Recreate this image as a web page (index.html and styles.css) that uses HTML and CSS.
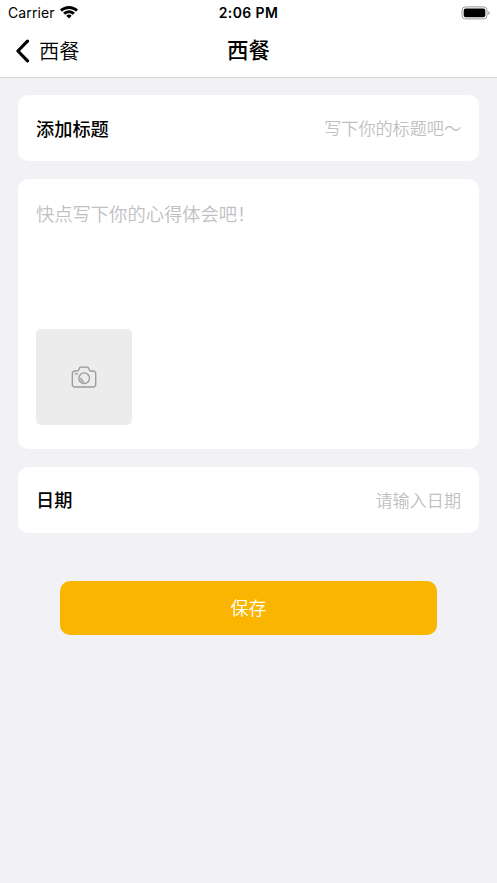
FILE: index.html
```
<!DOCTYPE html>
<html lang="zh-CN">
<head>
<meta charset="utf-8">
<title>西餐</title>
<link rel="stylesheet" href="styles.css">
</head>
<body>
<header class="top">
  <div class="status">
    <div class="carrier"><span>Carrier</span>
      <svg class="wifi" viewBox="0 0 18 13"><path d="M9 0C5.600 0 2.500 1.300 0 3.600L2 5.700C3.900 3.900 6.300 2.900 9 2.900s5.100 1 7 2.800l2-2.100C15.500 1.300 12.400 0 9 0Z"/><path d="M9 4.300c-2.200 0-4.300.9-5.900 2.400l2.100 2.100C6.200 7.800 7.500 7.200 9 7.200s2.800.6 3.800 1.600l2.100-2.100C13.300 5.200 11.200 4.300 9 4.300Z"/><path d="M9 8.600c-1.100 0-2 .4-2.700 1.100L9 12.600l2.700-2.900C11 9 10.100 8.600 9 8.600Z"/></svg>
    </div>
    <span class="time">2:06 PM</span>
    <svg class="battery" viewBox="0 0 30 14"><rect x="1" y=".9" width="25" height="12" rx="3.500" fill="none" stroke="#999"/><rect x="2.700" y="2.600" width="21.600" height="8.600" rx="2"/><path d="M27.300 4.900v4c1.900-.7 1.900-3.300 0-4Z" fill="#999"/></svg>
  </div>
  <nav class="nav">
    <a class="back"><svg class="chevron" viewBox="0 0 14 24"><path d="M11.500 2.200 1.900 12l9.600 9.800"/></svg><span>西餐</span></a>
    <h1 class="title">西餐</h1>
  </nav>
</header>
<main class="form">
  <section class="card row"><span class="label">添加标题</span><span class="hint">写下你的标题吧～</span></section>
  <section class="card note"><p class="prompt">快点写下你的心得体会吧！</p>
    <div class="photo"><svg class="camera" viewBox="0 0 26 22"><path d="M3.800 5H6.200Q7.300 5 7.700 4L8.400 2.200Q8.800 1.200 10 1.200h6Q17.200 1.200 17.600 2.200L18.300 4Q18.700 5 19.800 5h2.400a2.500 2.500 0 0 1 2.500 2.500v11a2.500 2.500 0 0 1-2.500 2.500H3.800a2.500 2.500 0 0 1-2.500-2.500v-11A2.500 2.500 0 0 1 3.800 5Z"/><circle cx="13.200" cy="12.200" r="5.300"/><path d="M9.900 12.200A3.300 3.300 0 0 0 12.400 15.300M4.200 7.800h2.400"/></svg></div>
  </section>
  <section class="card row"><span class="label">日期</span><span class="hint">请输入日期</span></section>
  <button class="save">保存</button>
</main>
</body>
</html>
```
FILE: styles.css
```
* { box-sizing: border-box; }
body { margin: 0; min-height: 883px; background: #f2f1f6; font-family: Inter, "Noto Sans CJK SC", sans-serif; color: #000; }
.top { height: 78px; background: #fff; border-bottom: 1px solid #d4d4d6; }
.status { height: 25px; padding: 0 6px 0 8px; display: grid; grid-template-columns: 1fr auto 1fr; align-items: center; font-size: 14px; letter-spacing: .1px; }
.carrier { display: flex; align-items: center; gap: 5.500px; }
.wifi { width: 18px; height: 13px; }
.time { font-weight: 600; letter-spacing: .4px; margin-right: 2px; }
.battery { width: 30px; height: 14px; justify-self: end; }
.nav { height: 52px; padding: 0 16px; display: grid; grid-template-columns: 1fr auto 1fr; align-items: center; }
.back { display: flex; align-items: center; gap: 9px; font-size: 20.300px; line-height: 28px; }
.back span { padding-top: 1px; font-weight: 350; }
.chevron { width: 14px; height: 24px; margin-left: -.5px; margin-right: .5px; fill: none; stroke: #000; stroke-width: 3.200; stroke-linecap: round; stroke-linejoin: round; }
.title { margin: 0; padding-bottom: 2px; font-size: 21.500px; line-height: 30px; font-weight: 500; }
.form { padding: 17px 18px; display: flex; flex-direction: column; gap: 18px; }
.card { background: #fff; border-radius: 10px; padding: 0 18px; }
.row { height: 66px; padding-bottom: 1px; display: flex; align-items: center; justify-content: space-between; }
.label { font-size: 18.200px; font-weight: 500; }
.hint { font-size: 17.100px; font-weight: 350; color: #c0c0c2; }
.note { height: 269.700px; padding: 21px 18px 23.700px; display: flex; flex-direction: column; justify-content: space-between; }
.prompt { margin: 0; font-size: 18.300px; line-height: 28px; font-weight: 350; color: #c0c0c2; }
.photo { width: 96px; height: 96px; border-radius: 5px; background: #ececec; display: grid; place-items: center; }
.camera { width: 26px; height: 22px; fill: none; stroke: #999; stroke-width: 1.300; stroke-linecap: round; }
.save { margin: 30px 42px 0; padding: 0 0 1px; height: 54px; border: 0; border-radius: 10px; background: #f9b500; color: #fff; font: 350 18px Inter, "Noto Sans CJK SC", sans-serif; }
```
